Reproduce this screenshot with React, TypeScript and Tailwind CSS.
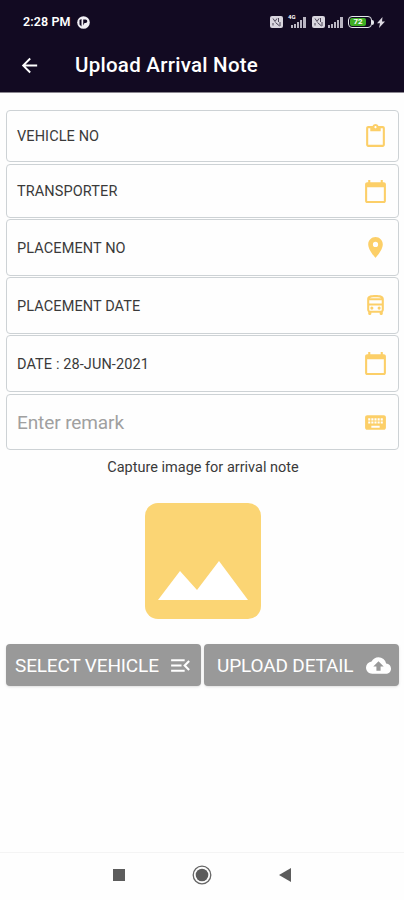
import React from 'react';
import {
  MdArrowBack,
  MdBackup,
  MdCalendarToday,
  MdContentPaste,
  MdKeyboard,
  MdMenuOpen,
  MdOutlineDirectionsBus,
  MdPlace,
} from 'react-icons/md';

const Signal = () => (
  <svg width="16" height="12" viewBox="0 0 16 12" fill="#b9b5c2">
    <path d="M0 9h2v3H0zM3 8h2v4H3zM6 6h2v6H6zM9 4h2v8H9zM12 1h3v11h-3z" />
  </svg>
);

const VoLte = () => (
  <svg width="13" height="12" viewBox="0 0 13 12">
    <rect width="13" height="12" rx="2" fill="#d8d5de" />
    <path d="M3 2.5l2 3 2-3M8.5 2v4M3 9.5V7M5.5 6.5l4 3.5M10 6v4" stroke="#4a4456" fill="none" />
  </svg>
);

const StatusBar = () => (
  <div className="flex h-[44px] items-center pr-[19px] pl-[23px] text-white">
    <p className="w-[48px] text-[12.5px] leading-none font-semibold tracking-[0.1px] whitespace-nowrap">2:28 PM</p>
    <svg className="ml-[6px]" width="13" height="13" viewBox="0 0 13 13">
      <circle cx="6.5" cy="6.5" r="6.3" fill="#f1eff4" />
      <path d="M2.5 4l2-1v7.5l-2-2zM6.2 9.5V3.5h2.3a1.8 1.8 0 010 3.6H7.5z" fill="#120a22" />
    </svg>
    <div className="ml-auto flex items-center">
      <VoLte />
      <div className="relative ml-[8px]">
        <Signal />
        <span className="absolute -top-[2px] -left-[3px] bg-[#120a22] text-[6px] leading-[6px] font-bold">4G</span>
      </div>
      <div className="ml-[5px]">
        <VoLte />
      </div>
      <div className="ml-[3px]">
        <Signal />
      </div>
      <div className="ml-[4px] flex h-[12px] w-[24px] rounded-[4px] border-[1.5px] border-gray-200 p-px">
        <div className="flex w-[16px] items-center justify-center rounded-[2px] bg-[#3fae24] text-[8px] leading-none font-bold">
          72
        </div>
      </div>
      <div className="h-[5px] w-[2px] rounded-r bg-gray-200" />
      <svg className="ml-[3px]" width="8" height="11" viewBox="0 0 8 11" fill="#dcd9e2">
        <path d="M5.5 0L0 6.2h3L2 11l6-6.5H5z" />
      </svg>
    </div>
  </div>
);

const App = () => {
  return (
    <div className="flex h-[900px] w-[404px] flex-col overflow-hidden bg-[#fefefe] font-[Roboto,sans-serif] text-[#3a3a3a]">
      {/* HEADER */}
      <header className="h-[93px] shrink-0 border-b border-[#8b8790] bg-[#120a22]">
        <StatusBar />
        <div className="flex h-[42px] items-center pl-[18px] text-white">
          <MdArrowBack size={23} />
          <h1 className="ml-[34px] text-[20.5px] leading-none font-medium tracking-[0.26px]">Upload Arrival Note</h1>
        </div>
      </header>

      {/* FIELDS */}
      <div className="mt-[17px] flex flex-col gap-[2px] pr-[5px] pl-[6px] text-[14.5px] tracking-[0.1px]">
        <div className="flex h-[52px] items-center justify-between rounded-[4px] border border-[#cdd2d5] px-[10px]">
          <p className="pt-[2px]">VEHICLE NO</p>
          <MdContentPaste size={25} color="#fccf68" />
        </div>
        <div className="flex h-[54px] items-center justify-between rounded-[4px] border border-[#cdd2d5] px-[10px]">
          <p className="pt-[2px]">TRANSPORTER</p>
          <MdCalendarToday size={25} color="#fccf68" />
        </div>
        <div className="-mt-px flex h-[57px] items-center justify-between rounded-[4px] border border-[#cdd2d5] px-[10px]">
          <p className="pt-[2px]">PLACEMENT NO</p>
          <MdPlace size={25} color="#fccf68" />
        </div>
        <div className="-mt-px flex h-[57px] items-center justify-between rounded-[4px] border border-[#cdd2d5] px-[10px]">
          <p className="pt-[2px]">PLACEMENT DATE</p>
          <MdOutlineDirectionsBus size={25} color="#fccf68" />
        </div>
        <div className="-mt-px flex h-[57px] items-center justify-between rounded-[4px] border border-[#cdd2d5] px-[10px]">
          <p className="pt-[2px]">DATE : 28-JUN-2021</p>
          <MdCalendarToday size={25} color="#fccf68" />
        </div>
        <div className="flex h-[56px] items-center justify-between rounded-[4px] border border-[#cdd2d5] px-[10px]">
          <p className="pt-[2px] text-[19px] tracking-[-0.1px] text-[#a0a0a0]">Enter remark</p>
          <MdKeyboard size={25} color="#fccf68" />
        </div>
      </div>

      {/* IMAGE */}
      <p className="mt-[8px] pl-[2px] text-center text-[14.5px] leading-[20px]">Capture image for arrival note</p>
      <svg className="mt-[25px] ml-[145px] shrink-0" width="116" height="116" viewBox="0 0 116 116">
        <rect width="116" height="116" rx="13" fill="#fbd574" />
        <path d="M13 97l22-29 17 19 22-29 29 39z" fill="#fff" />
      </svg>

      {/* BUTTONS */}
      <div className="mt-[25px] flex gap-[3px] pr-[5px] pl-[6px] text-[19px] tracking-[-0.15px] text-white">
        <button className="flex h-[42px] w-[195px] items-center justify-between rounded-[4px] bg-[#999] pt-[2px] pr-[8px] pl-[9px] whitespace-nowrap shadow">
          SELECT VEHICLE
          <MdMenuOpen className="mb-[2px]" size={25} />
        </button>
        <button className="flex h-[42px] w-[195px] items-center justify-between rounded-[4px] bg-[#999] pt-[2px] pr-[8px] pl-[13px] whitespace-nowrap shadow">
          UPLOAD DETAIL
          <MdBackup className="mb-[2px]" size={25} />
        </button>
      </div>

      {/* NAVIGATION */}
      <div className="mt-auto flex h-[48px] shrink-0 items-center border-t border-[#f4f4f4] pb-[3px] pl-[113px]">
        <div className="size-[12px] bg-[#5c5c5c]" />
        <svg className="ml-[67px]" width="20" height="20" viewBox="0 0 20 20">
          <circle cx="10" cy="10" r="8.8" fill="none" stroke="#666" strokeWidth="1.3" />
          <circle cx="10" cy="10" r="6.3" fill="#5c5c5c" />
        </svg>
        <svg className="ml-[67px]" width="12" height="14" viewBox="0 0 12 14" fill="#5c5c5c">
          <path d="M0 7l12-7v14z" />
        </svg>
      </div>
    </div>
  );
};

export default App;
